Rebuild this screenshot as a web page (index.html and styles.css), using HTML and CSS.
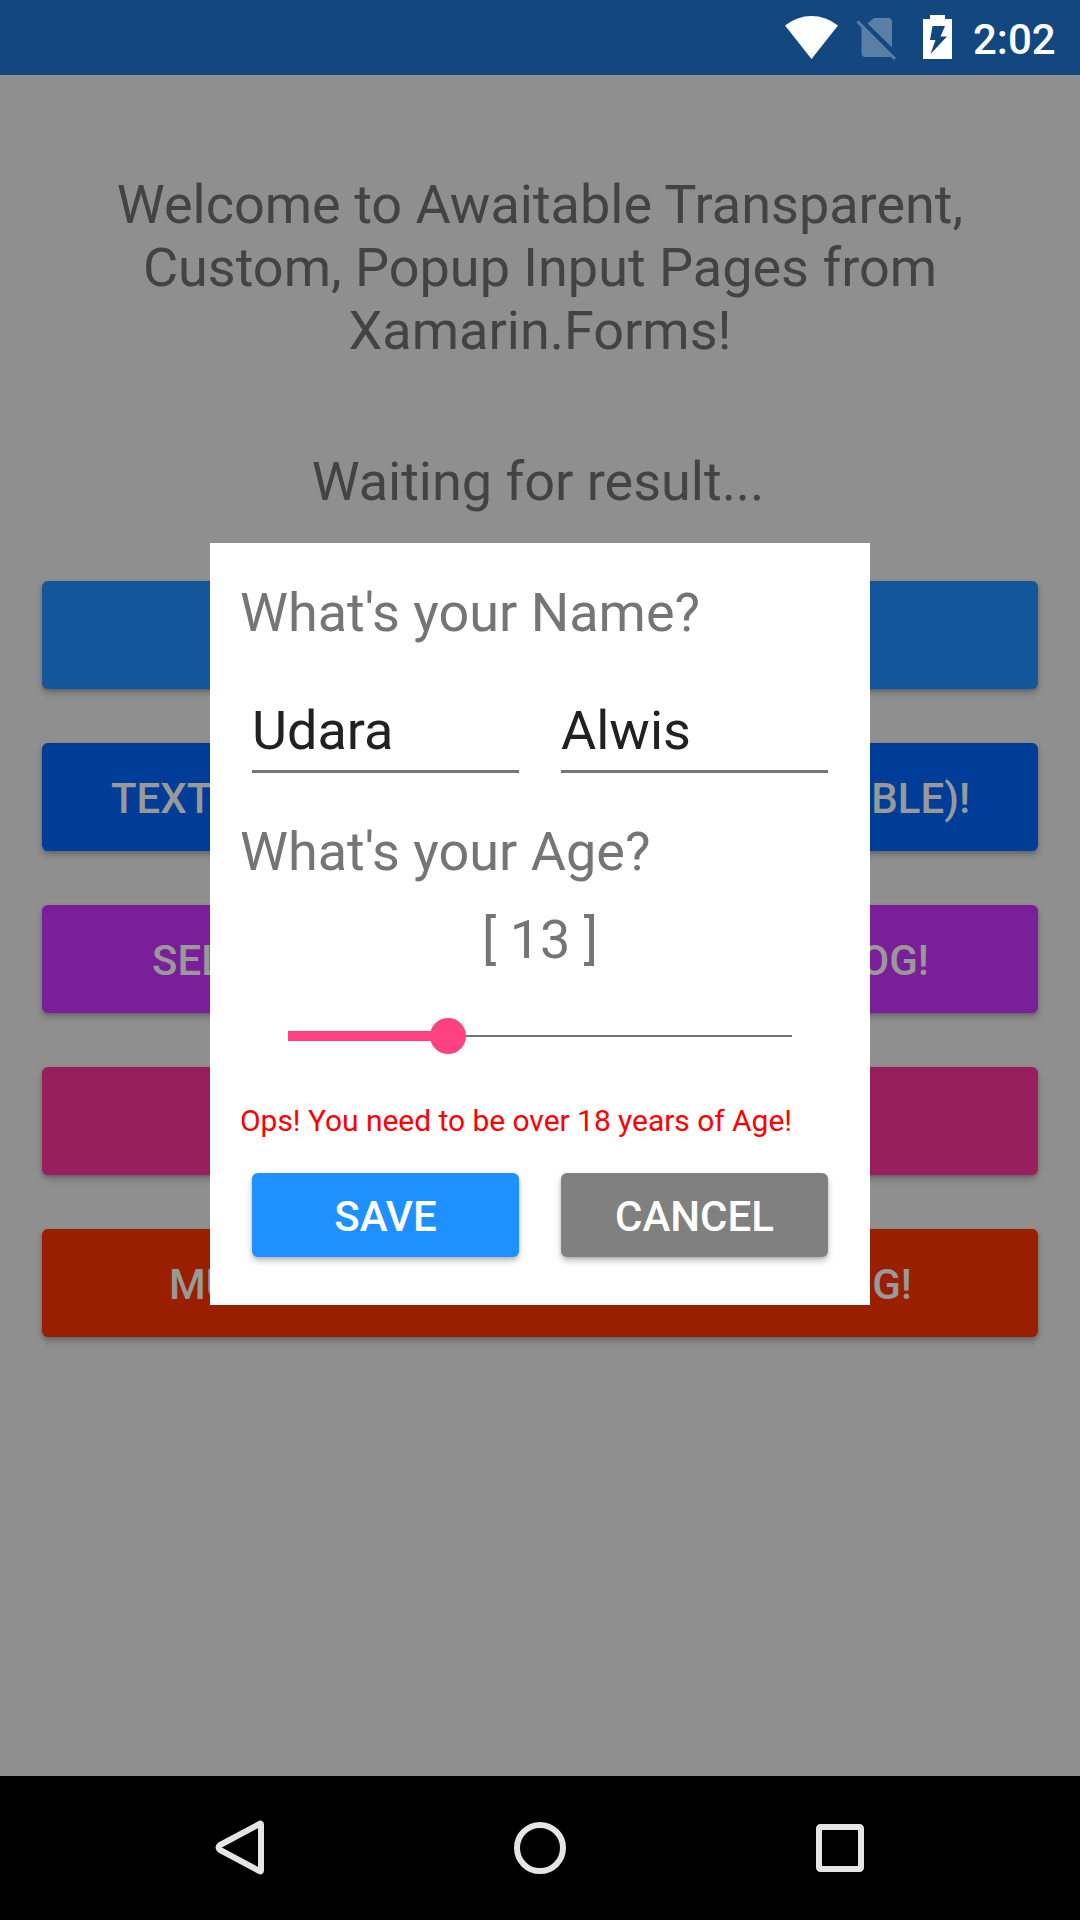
FILE: index.html
```html
<!DOCTYPE html>
<html lang="en">
<head>
<meta charset="utf-8">
<title>Popup Input</title>
<link rel="stylesheet" href="styles.css">
</head>
<body>
<div class="screen">
  <header class="status">
    <svg class="status-icons" width="180" height="75" viewBox="780 0 180 75" aria-hidden="true">
      <path fill="#fff" d="M785 25.5Q797 16 811.5 16T838 25.5L811.5 59Z"/>
      <path fill="#597fa6" d="M874 18H888Q892 18 892 22V47.5L867.5 23.5ZM861.500 27L891 56.500Q890 57 888 57H865.500Q861.500 57 861.500 53Z"/>
      <path stroke="#597fa6" stroke-width="3" d="M857.500 21.500L895 59"/>
      <path fill="#fff" fill-rule="evenodd" d="M930 15H945V19H952V59H923V19H930ZM932.500 26L930 40H935.500L930.500 54L947 36.500H940.500L945 26Z"/>
    </svg>
    <time class="clock">2:02</time>
  </header>
  <main class="page">
    <p class="heading">Welcome to Awaitable Transparent,<br>Custom, Popup Input Pages from<br>Xamarin.Forms!</p>
    <p class="heading result">Waiting for result...</p>
    <div class="options">
      <button class="option blue"></button>
      <button class="option navy"><span>TEXT</span><span>BLE)!</span></button>
      <button class="option purple"><span>SEL</span><span>OG!</span></button>
      <button class="option pink"></button>
      <button class="option red"><span>MU</span><span>G!</span></button>
    </div>
  </main>
  <nav class="navbar">
    <svg width="60" height="60" viewBox="0 0 60 60"><path d="M51 6.500V52.500Q51 54 49.500 53L10 32Q7 29.500 10 27L49.500 6Q51 5 51 6.500Z"/></svg>
    <svg width="60" height="60" viewBox="0 0 60 60"><circle cx="30" cy="30" r="23"/></svg>
    <svg width="60" height="60" viewBox="0 0 60 60"><rect x="9" y="9" width="42" height="42" rx="1.500"/></svg>
  </nav>
  <section class="dialog">
    <p class="label">What's your Name?</p>
    <div class="fields">
      <div class="field">Udara</div>
      <div class="field">Alwis</div>
    </div>
    <p class="label age">What's your Age?</p>
    <p class="label value">[ 13 ]</p>
    <div class="slider">
      <div class="filled"></div>
      <div class="thumb"></div>
      <div class="track"></div>
    </div>
    <p class="error">Ops! You need to be over 18 years of Age!</p>
    <div class="actions">
      <button class="action save">SAVE</button>
      <button class="action cancel">CANCEL</button>
    </div>
  </section>
</div>
</body>
</html>
```
FILE: styles.css
```css
* { box-sizing: border-box; }
body { margin: 0; font-family: Roboto, sans-serif; }
p { margin: 0; }
button { border: 0; margin: 0; font: 500 42px/50px Roboto, sans-serif; }

.screen {
  position: relative;
  display: flex;
  flex-direction: column;
  width: 1080px;
  height: 1920px;
  overflow: hidden;
  background: #8f8f8f;
}

.status {
  display: flex;
  justify-content: flex-end;
  align-items: center;
  height: 75px;
  padding-right: 23px;
  background: #12477f;
}
.status-icons { margin-right: 13px; }
.clock {
  width: 84px;
  padding-top: 5px;
  color: #fff;
  font-size: 42px;
  font-weight: 500;
  line-height: 50px;
  white-space: nowrap;
}

.page { flex: 1; padding: 98px 42px 0; }
.heading {
  color: #434343;
  font-size: 54px;
  line-height: 63px;
  text-align: center;
}
.result { margin-top: 88px; padding-right: 4px; }

.options {
  display: flex;
  flex-direction: column;
  gap: 54px;
  margin-top: 68px;
}
.option {
  display: flex;
  justify-content: space-between;
  align-items: center;
  height: 108px;
  padding: 4px 68px 0 69px;
  border-radius: 6px;
  color: #999;
  box-shadow: 0 4px 6px rgba(0, 0, 0, .24), 0 1px 3px rgba(0, 0, 0, .12);
}
.blue { background: #135699; }
.navy { background: #003d99; }
.purple { padding-inline: 110px 109px; background: #7a1f99; }
.pink { background: #991f5c; }
.red { padding-inline: 127px 126px; background: #991f00; }

.navbar {
  display: flex;
  justify-content: space-between;
  align-items: center;
  height: 144px;
  padding: 0 210px;
  background: #000;
}
.navbar svg { fill: none; stroke: #e5e5e5; stroke-width: 6; }

.dialog {
  position: absolute;
  top: 543px;
  left: 210px;
  width: 660px;
  height: 762px;
  padding: 38px 30px 0;
  background: #fff;
}
.label {
  color: #757575;
  font-size: 54px;
  line-height: 63px;
}
.fields, .actions {
  display: flex;
  gap: 42px;
  padding: 0 12px;
}
.fields { margin-top: 55px; }
.field {
  width: 267px;
  height: 74px;
  border-bottom: 3px solid #757575;
  color: #212121;
  font-size: 54px;
  line-height: 63px;
}
.field, .action { flex: none; }
.age { margin-top: 47px; }
.value { margin-top: 25px; text-align: center; }

.slider {
  display: flex;
  align-items: center;
  height: 36px;
  margin: 47px 48px 0;
}
.filled { width: 143px; height: 10px; margin-right: -1px; background: #ff4081; }
.thumb { width: 36px; height: 36px; border-radius: 50%; background: #ff4081; }
.track { flex: 1; height: 2px; background: #757575; }

.error {
  margin-top: 49px;
  color: #f00;
  font-size: 30px;
  line-height: 35px;
  letter-spacing: -.04px;
  white-space: nowrap;
}
.actions { margin-top: 35px; }
.action {
  width: 267px;
  height: 84px;
  padding: 3px 0 0;
  border-radius: 6px;
  color: #fff;
  box-shadow: 0 4px 6px rgba(0, 0, 0, .24), 0 1px 3px rgba(0, 0, 0, .12);
}
.save { background: #1e90ff; }
.cancel { background: #808080; }
```
